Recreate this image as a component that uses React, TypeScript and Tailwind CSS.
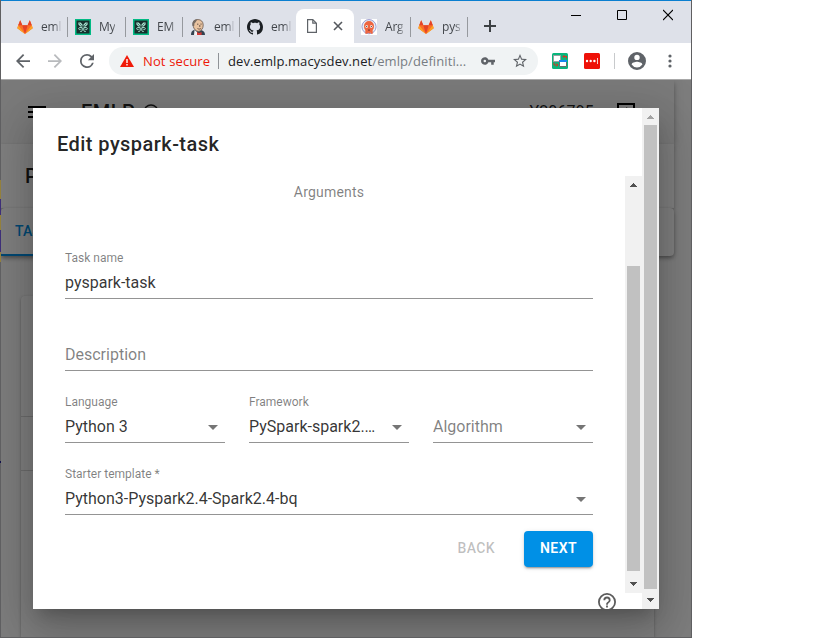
import React from "react";
import { clsx } from "clsx";

const ui = "font-['Open_Sans','Noto_Sans',sans-serif]";

function GitlabIcon() {
  return (
    <svg width="16" height="16" viewBox="0 0 16 16">
      <path d="M8 15 .3 9.3 1.2 6.2 3.2 1.2 5.4 6.3h5.2l2.2-5.1 2 5 .9 3.1z" fill="#fc6d26" />
      <path d="M8 15 5.3 6.3h5.4z" fill="#e24329" />
      <path d="M1.2 6.2.3 9.3 8 15zM14.8 6.2l.9 3.1L8 15z" fill="#fca326" />
      <path d="M1.2 6.2 3.2 1.2l2.2 5.1zM14.8 6.2l-2-5-2.2 5.1z" fill="#e24329" />
    </svg>
  );
}

function KnotIcon() {
  return (
    <svg width="16" height="16" viewBox="0 0 16 16">
      <path d="M0 0h16v16H0z" fill="#02ba84" />
      <path d="M1.5 1.5h13v13h-13z" fill="#17302d" />
      <path d="M3.4 3.6h2.2l1.9 1.9v2H5.3L3.4 5.6zM12.6 3.6h-2.2L8.5 5.5v2h2.2l1.9-1.9z" fill="#a9e5d3" />
      <path d="m4.4 4.6 2.4 2.2m4.8-2.2L9.2 6.8" stroke="#17302d" strokeWidth=".7" />
      <path d="M7.4 8.6H4.6c-1.2 0-1.2 2 0 2h1M8.6 8.6h2.8c1.2 0 1.2 2 0 2h-1M7.2 9v2.2c0 1.2-1.2 1.6-2 1.2M8.8 9v2.2c0 1.2 1.2 1.6 2 1.2" fill="none" stroke="#a9e5d3" strokeWidth="1" />
    </svg>
  );
}

function JenkinsIcon() {
  return (
    <svg width="16" height="16" viewBox="0 0 16 16">
      <path d="M1 16c0-3 1-4.5 3.5-5.3L8 12l3-1c2.7.8 4 2 4 5z" fill="#334451" />
      <path d="M3 5C3 2 5 .6 8 .6s5.2 2 5.2 5.4-1.7 6-4.5 6.4C5.2 12.2 3 9 3 5z" fill="#e8c3a0" stroke="#67584f" strokeWidth=".8" />
      <path d="M2.6 7C1.7 3 3.5 0 8 .3 6 1.5 6 3.7 4.5 4.2L4.2 7z" fill="#756b64" />
      <path d="M7 5.2h1.4m2-.1h1.3M9.8 6v2M7.5 9.5c1.4.9 2.7.7 3.6-.2" stroke="#4b3b35" strokeWidth=".8" fill="none" />
      <path d="m7 13 2 1 2.6-1v3H9l-2 0z" fill="#d33833" />
      <path d="m4.5 11 2.5 2v3H4z" fill="#f2f2f2" />
    </svg>
  );
}

function GithubIcon() {
  return (
    <svg width="16" height="16" viewBox="0 0 16 16" fill="#1b1f23">
      <path d="M8 0C3.58 0 0 3.58 0 8c0 3.54 2.29 6.53 5.47 7.59.4.07.55-.17.55-.38 0-.19-.01-.82-.01-1.49-2.01.37-2.53-.49-2.69-.94-.09-.23-.48-.94-.82-1.13-.28-.15-.68-.52-.01-.53.63-.01 1.08.58 1.23.82.72 1.21 1.87.87 2.33.66.07-.52.28-.87.51-1.07-1.78-.2-3.64-.89-3.64-3.95 0-.87.31-1.59.82-2.15-.08-.2-.36-1.02.08-2.12 0 0 .67-.21 2.2.82.64-.18 1.32-.27 2-.27s1.36.09 2 .27c1.53-1.04 2.2-.82 2.2-.82.44 1.1.16 1.92.08 2.12.51.56.82 1.27.82 2.15 0 3.07-1.87 3.75-3.65 3.95.29.25.54.73.54 1.48 0 1.07-.01 1.93-.01 2.2 0 .21.15.46.55.38A8.01 8.01 0 0 0 16 8c0-4.42-3.58-8-8-8z" />
    </svg>
  );
}

function ArgoIcon() {
  return (
    <svg width="16" height="16" viewBox="0 0 16 16">
      <path d="M0 0h16v16H0z" fill="#fff" />
      <circle cx="8" cy="7.7" r="7.1" fill="#e6edf5" stroke="#9292c9" strokeWidth=".9" />
      <path d="M3 7a5 5 0 0 1 10 0c0 2-.5 3-1.3 4v3.8H10l-.6-1.2-1 1.2-1.4-1-.9 1H4.3V11C3.5 10 3 9 3 7z" fill="#ee6540" />
      <circle cx="5.7" cy="7.5" r="1.3" fill="#fff" /><circle cx="10.3" cy="7.5" r="1.3" fill="#fff" />
      <circle cx="5.7" cy="7.5" r=".6" fill="#222" /><circle cx="10.3" cy="7.5" r=".6" fill="#222" />
      <path d="M7 11.5c0-1.5 2-1.5 2 0z" fill="#49232a" />
    </svg>
  );
}

function Tab({ icon, label, width, last = true }: { icon: React.ReactNode; label: string; width: string; last?: boolean }) {
  return (
    <div className={clsx("flex h-[33px] shrink-0 items-center pl-[7px]", width)}>
      <span className="w-4 shrink-0">{icon}</span>
      <span className="ml-2 w-max bg-linear-to-r from-[#3f4348] from-13px to-[#45494e]/10 to-21px bg-clip-text text-[12px] leading-4 tracking-[-0.2px] whitespace-nowrap text-transparent [background-image:linear-gradient(to_right,#3f4348_13px,#3f434820_20px)]">{label}</span>
      {last && <span className="ml-auto h-5 w-px shrink-0 bg-[#96999e]" />}
    </div>
  );
}

function TabStrip() {
  return (
    <div className="flex h-[43px] shrink-0 border-t border-[#0a7fd0] bg-[#dee1e9] pt-2 pl-[9px]">
      <div className="flex h-[34px] items-end">
        <Tab icon={<GitlabIcon />} label="eml" width="w-[58px]" />
        <Tab icon={<KnotIcon />} label="My" width="w-[58px]" />
        <Tab icon={<KnotIcon />} label="EM" width="w-[57px]" />
        <Tab icon={<JenkinsIcon />} label="eml" width="w-[57px]" />
        <Tab icon={<GithubIcon />} label="eml" width="w-[56px]" last={false} />
        <div className="flex h-[34px] w-[58px] items-center justify-between rounded-t-lg bg-white pr-[11px] pl-[11px]">
          <svg width="10" height="14" viewBox="0 0 10 14" fill="none" stroke="#5f6368" strokeWidth="1.2"><path d="M.6.6h5.2l3.6 3.6v9.2H.6zM5.8.6v3.6h3.6" /></svg>
          <svg width="10" height="10" viewBox="0 0 10 10" stroke="#54585d" strokeWidth="1.6"><path d="m1 1 8 8m0-8-8 8" /></svg>
        </div>
        <Tab icon={<ArgoIcon />} label="Arg" width="w-[57px]" />
        <Tab icon={<GitlabIcon />} label="pys" width="w-[57px]" />
      </div>
      <svg className="mt-[11px] ml-4" width="12" height="12" viewBox="0 0 12 12" stroke="#3c4043" strokeWidth="2"><path d="M0 6h12M6 0v12" /></svg>
      <div className="ml-auto flex items-start gap-9 pr-[18px]">
        <svg width="10" height="12" viewBox="0 0 10 12" shapeRendering="crispEdges"><path d="M0 6h10v1H0z" /></svg>
        <svg width="10" height="12" viewBox="0 0 10 12" fill="none" stroke="#000"><path d="M.5 1.5h9v9h-9z" /></svg>
        <svg width="10" height="12" viewBox="0 0 10 12" stroke="#000" strokeWidth="1.1"><path d="m0 1 10 10m0-10L0 11" /></svg>
      </div>
    </div>
  );
}

function Toolbar() {
  return (
    <div className="flex h-9 shrink-0 items-center bg-white pl-[15px]">
      <svg width="14" height="14" viewBox="4 4 16 16" fill="#5f6368"><path d="M20 11H7.83l5.59-5.59L12 4l-8 8 8 8 1.41-1.41L7.83 13H20z" /></svg>
      <svg className="ml-[18px]" width="14" height="14" viewBox="4 4 16 16" fill="#b8babd"><path d="m12 4-1.41 1.41L16.17 11H4v2h12.17l-5.58 5.59L12 20l8-8z" /></svg>
      <svg className="ml-[18px]" width="14" height="14" viewBox="4 4 16 16" fill="#5f6368"><path d="M17.65 6.35A7.96 7.96 0 0 0 12 4a8 8 0 1 0 7.73 10h-2.08A6 6 0 1 1 12 6c1.66 0 3.14.69 4.22 1.78L13 11h7V4z" /></svg>
      <div className="ml-[15px] flex h-7 w-[429px] items-center rounded-full bg-[#f0f3f4] pl-[11px]">
        <svg width="14" height="12" viewBox="0 0 14 12"><path d="m7 0 7 12H0z" fill="#f01b09" /><path d="M6.3 4h1.4v4H6.3zm0 5h1.4v1.4H6.3z" fill="#fff" /></svg>
        <span className="ml-[9px] w-[67px] text-[13px] leading-4 tracking-[0.13px] whitespace-nowrap text-[#ed1909]">Not secure</span>
        <span className="ml-2 h-4 w-px bg-[#8f9397]" />
        <span className="ml-[9px] w-[240px] text-[13px] leading-4 tracking-[0.09px] whitespace-nowrap text-[#202124]">dev.emlp.macysdev.net<span className="text-[#777d83]">/emlp/definiti...</span></span>
        <svg className="ml-[13px]" width="14" height="8" viewBox="1 6 22 12" fill="#5f6368"><path d="M12.65 10A5.99 5.99 0 1 0 12.65 14H17v4h4v-4h2v-4zM7 14a2 2 0 1 1 0-4 2 2 0 0 1 0 4z" /></svg>
        <svg className="ml-[18px]" width="14" height="14" viewBox="2 2 20 20" fill="#5f6368"><path d="m22 9.24-7.19-.62L12 2 9.19 8.63 2 9.24l5.46 4.73L5.82 21 12 17.27 18.18 21l-1.63-7.03zM12 15.4l-3.76 2.27 1-4.28-3.32-2.88 4.38-.38L12 6.1l1.71 4.04 4.38.38-3.32 2.88 1 4.28z" /></svg>
      </div>
      <svg className="ml-[14px]" width="16" height="16" viewBox="0 0 16 16"><rect width="16" height="16" rx="1.5" fill="#08b57c" /><path d="M1.5 2.5h7v6h-7z" fill="#fff" stroke="#9a9f9e" /><path d="M7.5 7.5h7v6h-7z" fill="#fff" stroke="#63706d" /><path d="M7 7h8v2H7z" fill="#1688ee" /><path d="M15 3.5h-4m1.5-1.5L11 3.5 12.5 5m2-1.5v2M2 9.5V12h4M4.5 10.5 6 12l-1.5 1.5" fill="none" stroke="#d73420" /></svg>
      <svg className="ml-4" width="16" height="16" viewBox="0 0 16 16"><rect width="16" height="16" rx="1.5" fill="#ee1108" /><circle cx="3" cy="8" r="1.2" fill="#fff" /><circle cx="6.7" cy="8" r="1.2" fill="#fff" /><circle cx="10.4" cy="8" r="1.2" fill="#fff" /><path d="M13.5 5v6" stroke="#fff" strokeWidth=".8" /></svg>
      <span className="ml-[14px] h-4 w-px bg-[#c8cacc]" />
      <svg className="ml-[13px]" width="18" height="18" viewBox="2 2 20 20" fill="#5f6368"><path d="M12 2a10 10 0 1 0 0 20 10 10 0 0 0 0-20zm0 3a3 3 0 1 1 0 6 3 3 0 0 1 0-6zm0 14.2a7.2 7.2 0 0 1-6-3.22c.03-1.99 4-3.08 6-3.08s5.97 1.09 6 3.08a7.2 7.2 0 0 1-6 3.22z" /></svg>
      <svg className="ml-[22px]" width="4" height="14" viewBox="0 0 4 14" fill="#5f6368"><circle cx="2" cy="2" r="1.6" /><circle cx="2" cy="7" r="1.6" /><circle cx="2" cy="12" r="1.6" /></svg>
    </div>
  );
}

function Backdrop() {
  return (
    <div className="flex h-full flex-col bg-[#fafafa] text-black/87">
      <div className="mr-[17px] flex h-16 shrink-0 items-center bg-[#f5f5f5] px-[27px] shadow-[0_2px_4px_-1px_rgba(0,0,0,.2),0_4px_5px_rgba(0,0,0,.14),0_1px_10px_rgba(0,0,0,.12)]">
        <svg width="18" height="12" viewBox="0 0 18 12"><path d="M0 0h18v2H0zm0 5h18v2H0zm0 5h18v2H0z" /></svg>
        <span className="ml-[35px] text-xl font-medium tracking-[0.5px]">EMLP</span>
        <svg className="ml-2" width="16" height="16" viewBox="0 0 16 16" fill="none" stroke="#222" strokeWidth="1.5"><circle cx="8" cy="8" r="7" /><circle cx="8" cy="8" r="3" /></svg>
        <span className="ml-auto text-base tracking-[0.15px]">Y206795</span>
        <svg className="mr-[12px] ml-[23px]" width="18" height="18" viewBox="0 0 18 18" fill="none" stroke="#000" strokeWidth="2"><path d="M1 1h16v16H1zM5 9h8M9 5l4 4-4 4" /></svg>
      </div>
      <div className="mr-[17px] flex h-16 shrink-0 items-center bg-white pl-6 text-xl font-medium shadow-[0_2px_4px_rgba(0,0,0,.3)]">Pipeline</div>
      <div className="mr-[17px] flex h-12 shrink-0 items-center rounded bg-white text-sm font-medium text-[#0090e6] shadow-[0_2px_4px_rgba(0,0,0,.4)]">
        <span className="flex h-12 w-24 items-center border-b-2 border-[#0090e6] pl-[14px]">TASKS</span>
      </div>
      <div className="mt-10 mr-[37px] ml-5 grow rounded-t bg-white shadow-[0_1px_3px_rgba(0,0,0,.3)]">
        <div className="h-[121px] border-b border-black/15" />
        <div className="h-[54px] border-b border-black/15" />
      </div>
    </div>
  );
}

function Caret() {
  return <svg width="10" height="5" viewBox="0 0 10 5" className="mt-px mr-[7px] ml-4 shrink-0"><path d="M0 0h10L5 5z" fill="#757575" /></svg>;
}

function Field({ label, value, placeholder, select }: { label?: string; value?: string; placeholder?: string; select?: boolean }) {
  return (
    <div className="flex h-12 min-w-0 flex-1 flex-col border-b border-[#949494]">
      <span className="h-4 text-xs leading-[14px] text-black/50">{label}</span>
      <div className="flex h-[31px] items-center justify-between">
        <span className={clsx("truncate text-base leading-6", value ? "text-black/80" : "text-black/50")}>{value ?? placeholder}</span>
        {select && <Caret />}
      </div>
    </div>
  );
}

function Arrow({ down, muted }: { down?: boolean; muted?: boolean }) {
  return (
    <span className={clsx("flex h-[17px] w-[17px] shrink-0 justify-center", down ? "pt-1.5" : "pt-[7px]")}>
      <svg width="7" height="4" viewBox="0 0 7 4" fill={muted ? "#a3a3a3" : "#505050"} shapeRendering="crispEdges">
        <path d={down ? "M0 0h7L3.5 4z" : "M0 4h7L3.5 0z"} />
      </svg>
    </span>
  );
}

function Dialog() {
  return (
    <div className="absolute top-[108px] left-[33px] flex h-[501px] w-[626px] overflow-hidden bg-white">
      <div className="flex w-[609px] shrink-0 flex-col">
        <h2 className="h-[68px] shrink-0 pt-[22px] pl-6 text-xl leading-7 font-medium tracking-[0.44px] text-black/87">Edit pyspark-task</h2>
        <div className="flex h-[417px] shrink-0">
          <div className="flex w-[592px] flex-col pr-8 pl-8">
            <div className="h-[75px] pt-1.5 text-center text-sm leading-5 tracking-[0.2px] text-black/50">Arguments</div>
            <div className="flex"><Field label="Task name" value="pyspark-task" /></div>
            <div className="mt-6 flex"><Field placeholder="Description" /></div>
            <div className="mt-6 flex gap-6">
              <Field label="Language" value="Python 3" select />
              <Field label="Framework" value="PySpark-spark2.4-bq" select />
              <Field placeholder="Algorithm" select />
            </div>
            <div className="mt-6 flex"><Field label="Starter template *" value="Python3-Pyspark2.4-Spark2.4-bq" select /></div>
            <div className="mt-4 flex justify-end gap-[13px] text-sm font-medium tracking-[0.4px]">
              <button className="h-9 px-4 pb-0.5 text-black/26">BACK</button>
              <button className="h-9 w-[69px] rounded bg-[#0090e6] pb-0.5 font-semibold text-white shadow-[0_3px_1px_-2px_rgba(0,0,0,.2),0_2px_2px_rgba(0,0,0,.14),0_1px_5px_rgba(0,0,0,.12)]">NEXT</button>
            </div>
          </div>
          <div className="flex w-[17px] flex-col items-center bg-[#f1f1f1]">
            <Arrow />
            <div className="mt-[73px] h-[305px] w-[13px] bg-[#c1c1c1]" />
            <span className="mt-auto"><Arrow down /></span>
          </div>
        </div>
        <div className="flex shrink-0 justify-end pr-[26px]">
          <svg width="18" height="18" viewBox="2 2 20 20" fill="#5c5c5c"><path d="M11 18h2v-2h-2zm1-16a10 10 0 1 0 0 20 10 10 0 0 0 0-20zm0 18a8 8 0 1 1 0-16 8 8 0 0 1 0 16zm0-14a4 4 0 0 0-4 4h2a2 2 0 1 1 4 0c0 2-3 1.75-3 5h2c0-2.25 3-2.5 3-5a4 4 0 0 0-4-4z" /></svg>
        </div>
      </div>
      <div className="flex w-[17px] flex-col items-center bg-[#f1f1f1]">
        <Arrow muted />
        <div className="h-[464px] w-[13px] bg-[#c1c1c1]" />
        <span className="mt-auto"><Arrow down /></span>
      </div>
    </div>
  );
}

export default function App() {
  return (
    <div className="relative h-[638px] w-[819px] overflow-hidden bg-white font-[Roboto,sans-serif]">
      <div className="relative flex h-full w-[692px] flex-col border-x border-b border-[#5f5f61]">
        <div className={ui}><TabStrip /><Toolbar /></div>
        <div className="relative h-[558px] shrink-0 overflow-hidden border-t border-[#a8a8a8]">
          <Backdrop />
          <div className="absolute inset-0 bg-black/50" />
          <div className="absolute top-[28px] left-[32px] h-[501px] w-[626px] shadow-[0_11px_15px_-7px_rgba(0,0,0,.2),0_24px_38px_3px_rgba(0,0,0,.14),0_9px_46px_8px_rgba(0,0,0,.12)]" />
        </div>
        <div className="absolute top-[180px] -left-px flex w-px flex-col">
          <span className="h-[19px] bg-[#93803c]" /><span className="h-4 bg-[#3d2e78]" /><span className="h-[15px] bg-[#93803c]" /><span className="h-[22px] bg-[#3d2e78]" /><span className="h-2.5 bg-[#93803c]" />
          <span className="mt-[199px] h-0.5 bg-[#11114b]" />
        </div>
      </div>
      <Dialog />
    </div>
  );
}
